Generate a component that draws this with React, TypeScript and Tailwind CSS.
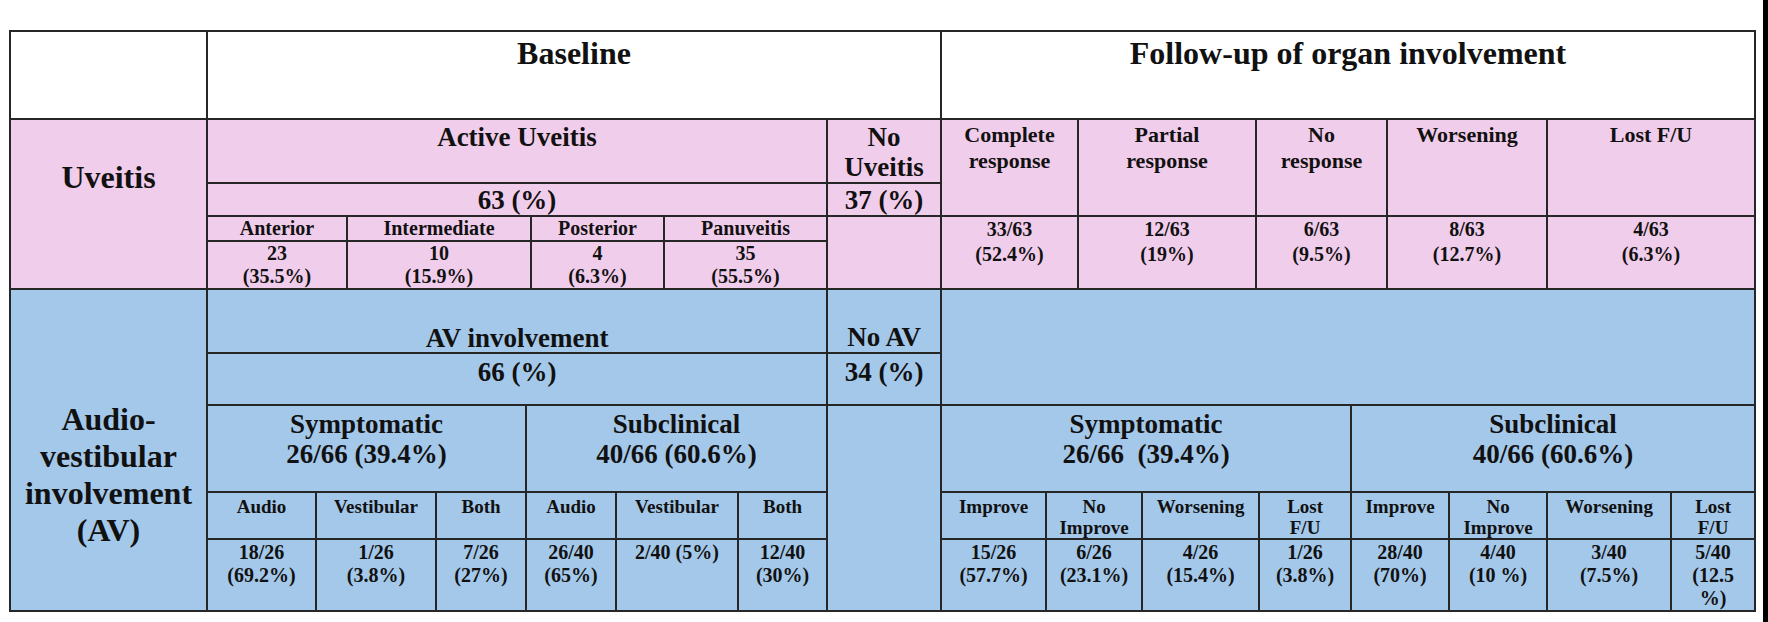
import React from "react";

const C = "border-2 border-[#262626] align-top text-center p-0";
const PINK = "bg-[#f1cdec]";

export default function App() {
  const upperCols = [197, 140, 184, 133, 163, 114, 137, 178, 131, 160, 208];
  const lowerCols = [197, 109, 120, 90, 90, 122, 89, 114, 105, 96, 117, 92, 98, 98, 124, 84];

  const lowerHeads: React.ReactNode[] = [
    "Audio",
    "Vestibular",
    "Both",
    "Audio",
    "Vestibular",
    "Both",
    "Improve",
    <>No<br />Improve</>,
    "Worsening",
    <>Lost<br />F/U</>,
    "Improve",
    <>No<br />Improve</>,
    "Worsening",
    <>Lost<br />F/U</>,
  ];
  const lowerVals: React.ReactNode[] = [
    <>18/26<br />(69.2%)</>,
    <>1/26<br />(3.8%)</>,
    <>7/26<br />(27%)</>,
    <>26/40<br />(65%)</>,
    <>2/40 (5%)</>,
    <>12/40<br />(30%)</>,
    <>15/26<br />(57.7%)</>,
    <>6/26<br />(23.1%)</>,
    <>4/26<br />(15.4%)</>,
    <>1/26<br />(3.8%)</>,
    <>28/40<br />(70%)</>,
    <>4/40<br />(10 %)</>,
    <>3/40<br />(7.5%)</>,
    <>5/40<br />(12.5<br />%)</>,
  ];

  return (
    <div className="w-[1768px] h-[622px] bg-white flex overflow-hidden font-['Liberation_Serif','Times_New_Roman',serif] font-bold text-[#111]">
      <div className="flex-1 pl-[9px] pt-[30px]">
        <table className="table-fixed border-collapse w-[1746px]">
          <colgroup>
            {upperCols.map((w, i) => (
              <col key={i} style={{ width: w }} />
            ))}
          </colgroup>
          <tbody>
            <tr className="h-[88px] bg-white">
              <td className={C}></td>
              <td colSpan={5} className={`${C} text-[32px] leading-[36px] pt-[3px]`}>Baseline</td>
              <td colSpan={5} className={`${C} text-[32px] leading-[36px] pt-[3px]`}>Follow-up of organ involvement</td>
            </tr>
            <tr className={`h-[64px] ${PINK}`}>
              <td rowSpan={4} className={`${C} text-[32px] leading-[36px] pt-[39px]`}>Uveitis</td>
              <td colSpan={4} className={`${C} text-[27px] leading-[30px] pt-[2px]`}>Active Uveitis</td>
              <td className={`${C} text-[27px] leading-[30px] pt-[2px]`}>No<br />Uveitis</td>
              <td rowSpan={2} className={`${C} text-[22px] leading-[26px] pt-[2px]`}>Complete<br />response</td>
              <td rowSpan={2} className={`${C} text-[22px] leading-[26px] pt-[2px]`}>Partial<br />response</td>
              <td rowSpan={2} className={`${C} text-[22px] leading-[26px] pt-[2px]`}>No<br />response</td>
              <td rowSpan={2} className={`${C} text-[22px] leading-[26px] pt-[2px]`}>Worsening</td>
              <td rowSpan={2} className={`${C} text-[22px] leading-[26px] pt-[2px]`}>Lost F/U</td>
            </tr>
            <tr className={`h-[33px] ${PINK}`}>
              <td colSpan={4} className={`${C} text-[27px] leading-[30px] pt-[1px]`}>63 (%)</td>
              <td className={`${C} text-[27px] leading-[30px] pt-[1px]`}>37 (%)</td>
            </tr>
            <tr className={`h-[25px] ${PINK}`}>
              <td className={`${C} text-[20px] leading-[23px]`}>Anterior</td>
              <td className={`${C} text-[20px] leading-[23px]`}>Intermediate</td>
              <td className={`${C} text-[20px] leading-[23px]`}>Posterior</td>
              <td className={`${C} text-[20px] leading-[23px]`}>Panuveitis</td>
              <td rowSpan={2} className={C}></td>
              <td rowSpan={2} className={`${C} text-[20px] leading-[25px]`}>33/63<br />(52.4%)</td>
              <td rowSpan={2} className={`${C} text-[20px] leading-[25px]`}>12/63<br />(19%)</td>
              <td rowSpan={2} className={`${C} text-[20px] leading-[25px]`}>6/63<br />(9.5%)</td>
              <td rowSpan={2} className={`${C} text-[20px] leading-[25px]`}>8/63<br />(12.7%)</td>
              <td rowSpan={2} className={`${C} text-[20px] leading-[25px]`}>4/63<br />(6.3%)</td>
            </tr>
            <tr className={`h-[48px] ${PINK}`}>
              <td className={`${C} text-[20px] leading-[23px]`}>23<br />(35.5%)</td>
              <td className={`${C} text-[20px] leading-[23px]`}>10<br />(15.9%)</td>
              <td className={`${C} text-[20px] leading-[23px]`}>4<br />(6.3%)</td>
              <td className={`${C} text-[20px] leading-[23px]`}>35<br />(55.5%)</td>
            </tr>
          </tbody>
        </table>

        <table className="table-fixed border-collapse w-[1746px] -mt-[2px] bg-[#a4c8ea]">
          <colgroup>
            {lowerCols.map((w, i) => (
              <col key={i} style={{ width: w }} />
            ))}
          </colgroup>
          <tbody>
            <tr className="h-[64px]">
              <td rowSpan={5} className={`${C} text-[32px] leading-[37px] pt-[111px]`}>
                Audio-<br />vestibular<br />involvement<br />(AV)
              </td>
              <td colSpan={6} className={`${C} text-[27px] leading-[28px] pt-[34px]`}>AV involvement</td>
              <td className={`${C} text-[27px] leading-[28px] pt-[33px]`}>No AV</td>
              <td colSpan={8} rowSpan={2} className={C}></td>
            </tr>
            <tr className="h-[52px]">
              <td colSpan={6} className={`${C} text-[27px] leading-[30px] pt-[3px]`}>66 (%)</td>
              <td className={`${C} text-[27px] leading-[30px] pt-[3px]`}>34 (%)</td>
            </tr>
            <tr className="h-[87px]">
              <td colSpan={3} className={`${C} text-[27px] leading-[30px] pt-[3px]`}>Symptomatic<br />26/66 (39.4%)</td>
              <td colSpan={3} className={`${C} text-[27px] leading-[30px] pt-[3px]`}>Subclinical<br />40/66 (60.6%)</td>
              <td rowSpan={3} className={C}></td>
              <td colSpan={4} className={`${C} text-[27px] leading-[30px] pt-[3px] whitespace-pre`}>Symptomatic<br />{"26/66  (39.4%)"}</td>
              <td colSpan={4} className={`${C} text-[27px] leading-[30px] pt-[3px]`}>Subclinical<br />40/66 (60.6%)</td>
            </tr>
            <tr className="h-[47px]">
              {lowerHeads.map((h, i) => (
                <td key={i} className={`${C} text-[19px] leading-[21px] pt-[3px]`}>{h}</td>
              ))}
            </tr>
            <tr className="h-[72px]">
              {lowerVals.map((v, i) => (
                <td key={i} className={`${C} text-[20px] leading-[23px] pt-[1px]`}>{v}</td>
              ))}
            </tr>
          </tbody>
        </table>
      </div>
      <div className="w-[5px] h-full bg-black" />
    </div>
  );
}
